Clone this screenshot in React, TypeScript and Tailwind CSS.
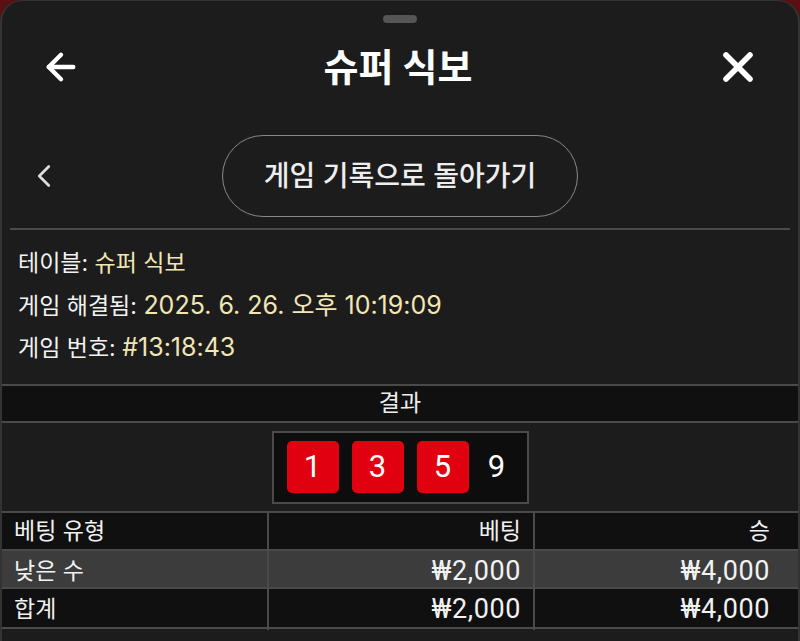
import { ArrowLeft, X, ChevronLeft } from "lucide-react"

const kr = { fontFamily: 'Inter, "Noto Sans CJK KR", sans-serif' }
const num = { fontFamily: 'Roboto, "Noto Sans CJK KR", sans-serif' }

const dice = [
  { v: 1, red: true },
  { v: 3, red: true },
  { v: 5, red: true },
  { v: 9, red: false },
]

const rows = [
  { type: "베팅 유형", bet: "베팅", win: "승", bg: "bg-[#101010]" },
  { type: "낮은 수", bet: "₩2,000", win: "₩4,000", bg: "bg-[#3c3c3c]" },
  { type: "합계", bet: "₩2,000", win: "₩4,000", bg: "bg-[#101010]" },
]

export default function App() {
  return (
    <div className="h-[641px] w-[800px] overflow-hidden bg-[#5a1010]" style={kr}>
      <div className="h-full rounded-t-[22px] border-x-2 border-t border-[#333] bg-[#1c1c1c] text-white">
        {/* drag handle */}
        <div className="flex justify-center pt-[14px]">
          <div className="h-[8px] w-[34px] rounded-full bg-[#555]" />
        </div>

        {/* header */}
        <div className="mt-[14px] flex h-[60px] items-center justify-between pl-[38px] pr-[36px]">
          <ArrowLeft className="h-[42px] w-[42px]" strokeWidth={2.5} />
          <h1 className="text-[38px] font-bold leading-none">슈퍼 식보</h1>
          <X className="h-[48px] w-[48px]" strokeWidth={2.8} />
        </div>

        {/* back to history */}
        <div className="relative mt-[38px] flex justify-center">
          <ChevronLeft className="absolute left-[23px] top-[22px] h-[38px] w-[38px] text-[#ddd]" strokeWidth={1.7} />
          <button className="flex h-[82px] w-[356px] items-center justify-center rounded-full border border-[#888] text-[28px] font-medium text-[#eee]">
            게임 기록으로 돌아가기
          </button>
        </div>

        <div className="mx-[8px] mt-[11px] h-[2px] bg-[#4a4a4a]" />

        {/* info */}
        <div className="px-[16px] pt-[12px] pb-[16px] text-[23px] leading-[42px] text-[#f2f2f2]">
          <div className="h-[42px]">
            테이블: <span className="text-[#f3e6b5]">슈퍼 식보</span>
          </div>
          <div className="h-[42px]">
            게임 해결됨: <span className="text-[25px] text-[#f3e6b5]">2025. 6. 26. 오후 10:19:09</span>
          </div>
          <div className="h-[42px]">
            게임 번호: <span className="text-[25px] text-[#f3e6b5]">#13:18:43</span>
          </div>
        </div>

        {/* results */}
        <div className="border-t-2 border-[#4a4a4a]">
          <div className="flex h-[37px] items-center justify-center border-b-2 border-[#4a4a4a] bg-[#101010] text-[23px] text-[#eee]">
            결과
          </div>
          <div className="flex h-[90px] items-center justify-center border-b-2 border-[#4a4a4a]">
            <div className="flex h-[73px] w-[257px] items-center gap-[13px] border-2 border-[#4a4a4a] bg-[#0d0d0d] pl-[13px]">
              {dice.map((d) =>
                d.red ? (
                  <div
                    key={d.v}
                    className="flex h-[52px] w-[52px] items-center justify-center rounded-[5px] bg-[#e1000f] text-[31px]"
                    style={num}
                  >
                    {d.v}
                  </div>
                ) : (
                  <div key={d.v} className="flex h-[52px] w-[30px] items-center justify-center text-[31px]" style={num}>
                    {d.v}
                  </div>
                )
              )}
            </div>
          </div>

          {/* bets table */}
          <div className="border-b-2 border-[#4a4a4a]">
            {rows.map((r, i) => (
              <div
                key={r.type}
                className={`grid h-[38px] grid-cols-[267px_266px_1fr] items-center text-[23px] text-[#f2f2f2] ${r.bg} ${
                  i < rows.length - 1 ? "border-b-2 border-[#4a4a4a]" : ""
                }`}
              >
                <div className="flex h-full items-center border-r-2 border-[#4a4a4a] pl-[12px]">{r.type}</div>
                <div
                  className={`flex h-full items-center justify-end border-r-2 border-[#4a4a4a] pr-[12px] ${
                    i === 0 ? "" : "text-[27px] tracking-[0.6px]"
                  }`}
                  style={i === 0 ? kr : num}
                >
                  {r.bet}
                </div>
                <div
                  className={`flex h-full items-center justify-end pr-[28px] ${i === 0 ? "" : "text-[27px] tracking-[0.6px]"}`}
                  style={i === 0 ? kr : num}
                >
                  {r.win}
                </div>
              </div>
            ))}
          </div>
        </div>
      </div>
    </div>
  )
}
